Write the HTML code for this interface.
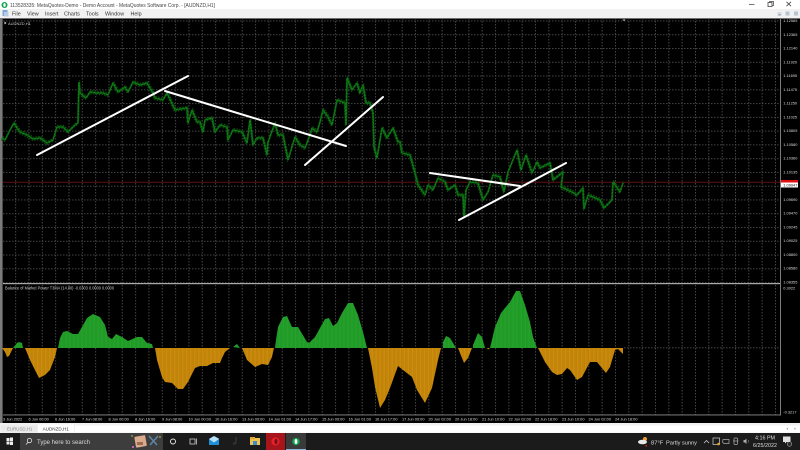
<!DOCTYPE html>
<html><head><meta charset="utf-8"><title>MetaQuotes</title>
<style>
html,body{margin:0;padding:0;background:#000;width:800px;height:450px;overflow:hidden}
svg{display:block;filter:blur(.3px)}
text{font-family:"Liberation Sans",sans-serif}
</style></head><body>
<svg width="800" height="450" viewBox="0 0 800 450" xmlns="http://www.w3.org/2000/svg">
<defs>
<pattern id="gv" x="1.85" y="0" width="13.33" height="3" patternUnits="userSpaceOnUse"><rect width="0.9" height="1.5" fill="#4c4c4c"/></pattern>
<pattern id="gh" x="0" y="6.72" width="3" height="13.77" patternUnits="userSpaceOnUse"><rect width="1.5" height="0.9" fill="#4c4c4c"/></pattern>
<pattern id="gs" x="2" y="0" width="1.33" height="4" patternUnits="userSpaceOnUse"><rect width="1.33" height="4" fill="#26a42c"/><rect width="0.35" height="4" fill="#178a1e"/></pattern>
<pattern id="os" x="2" y="0" width="1.33" height="4" patternUnits="userSpaceOnUse"><rect width="1.33" height="4" fill="#cf8d0c"/><rect width="0.35" height="4" fill="#a87208"/></pattern>
<polyline id="pr" fill="none" stroke-linejoin="bevel" points="2,138 5,140 10,130 14,123 17,128 20,132 27,135 33,139 40,138 47,143 53,140 57,127 63,127 68,132 75,125 78,123 79,82 80,93 86,98 90,92 97,93 103,93 108,95 113,83 118,92 125,87 128,92 133,82 140,85 147,83 153,93 155,98 163,100 167,93 175,110 187,108 188,123 192,110 197,122 200,122 203,132 205,120 212,118 215,132 220,125 227,127 228,140 233,130 242,132 247,143 250,120 253,145 257,138 263,138 267,155 268,142 275,123 278,135 283,135 288,160 295,137 300,145 305,148 310,135 312,128 317,132 320,122 323,110 328,117 332,125 337,100 345,103 346,125 347,78 352,90 357,83 360,93 363,85 366,103 370,103 373,113 374,147 377,158 382,128 387,138 393,128 398,142 400,142 402,153 410,155 415,173 418,185 425,195 428,185 433,190 438,178 445,182 448,190 455,185 458,195 463,195 464,217 466,190 470,182 478,183 483,200 488,192 493,175 500,177 504,192 508,172 517,150 521,170 526,155 532,173 537,162 540,168 550,163 553,180 563,172 561,187 572,192 577,195 583,188 584,209 588,195 600,200 604,208 612,200 613,182 620,192 623,183"/>
</defs>
<rect width="800" height="450" fill="#000"/>
<!-- title -->
<rect width="800" height="9" fill="#fff"/>
<rect y="9" width="800" height="9" fill="#f1f1f1"/>
<circle cx="4.5" cy="5" r="3" fill="#12a150"/><ellipse cx="4.5" cy="5" rx="1.2" ry="1.9" fill="#fff"/>
<text x="10" y="7" font-size="5.4" fill="#444" textLength="205" lengthAdjust="spacingAndGlyphs">113528335: MetaQuotes-Demo - Demo Account - MetaQuotes Software Corp. - [AUDNZD,H1]</text>
<rect x="749" y="4" width="5.5" height="0.8" fill="#555"/>
<rect x="768" y="2.5" width="4" height="4" fill="none" stroke="#444" stroke-width=".8"/><path d="M769.5 2.500V1.500H773.500V5.500H772.200" fill="none" stroke="#444" stroke-width=".7"/>
<path d="M786.500 1.800L791 6.200M791 1.800L786.500 6.200" stroke="#444" stroke-width=".8"/>
<!-- menu -->
<rect x="2.500" y="10" width="5" height="6" fill="#7ea6d8"/><rect x="4" y="12" width="4.500" height="4.500" fill="#b7cbe8"/>
<g font-size="5.4" fill="#333">
<text x="12" y="15.500">File</text><text x="27" y="15.500">View</text><text x="45" y="15.500">Insert</text><text x="64" y="15.500">Charts</text><text x="86" y="15.500">Tools</text><text x="105" y="15.500">Window</text><text x="130.500" y="15.500">Help</text>
</g>
<rect x="777.500" y="12" width="4" height="4" fill="#d4dbe3"/><rect x="785.500" y="11.500" width="4" height="4" fill="#b8c4d0"/><rect x="794" y="11.500" width="4" height="4" fill="#b8c4d0"/>
<rect x="778.500" y="14.500" width="2" height=".7" fill="#667"/>
<!-- frame -->
<rect x="0" y="18" width="800" height="1" fill="#707070"/>
<rect x="0" y="18" width="2.600" height="405" fill="#7a7a7a"/>
<!-- grid -->
<rect x="3" y="19" width="777" height="264" fill="url(#gv)"/>
<rect x="3" y="285" width="777" height="130" fill="url(#gv)"/>
<rect x="3" y="19" width="777" height="264" fill="url(#gh)"/>
<!-- current price line -->
<rect x="3" y="181.800" width="777" height=".8" fill="#7a1212"/>
<!-- price -->
<use href="#pr" x=".6" y="-1.600" stroke="#09500d" stroke-width="1.200" stroke-dasharray="1.600 1.200"/>
<use href="#pr" x="-.6" y="1.600" stroke="#09500d" stroke-width="1.200" stroke-dasharray="1.300 1.500"/>
<use href="#pr" stroke="#0a5f10" stroke-width="1.800"/>
<use href="#pr" stroke="#12861a" stroke-width=".9" stroke-dasharray="2 1.300"/>
<!-- white trend lines -->
<g stroke="#fff" stroke-width="2" stroke-linecap="round">
<line x1="37" y1="155" x2="188" y2="76"/>
<line x1="165" y1="91" x2="346" y2="146"/>
<line x1="305" y1="165" x2="383" y2="97"/>
<line x1="430" y1="173" x2="520" y2="186"/>
<line x1="459" y1="220" x2="566" y2="163"/>
</g>
<!-- separator + axis -->
<rect x="3" y="283" width="777" height="1.200" fill="#a8a8a8"/>
<rect x="3" y="414.500" width="777" height=".9" fill="#8a8a8a"/>
<rect x="780" y="19" width=".9" height="396.500" fill="#8a8a8a"/>
<path d="M622.500 19.500h3l-1.500 1.500z" fill="#ddd"/>
<!-- histogram -->
<g>
<polygon fill="url(#os)" points="2,348 5,352 7,357 9,356 13,348"/>
<polygon fill="url(#gs)" points="13,348 17,343 19,342 22,343 23,348"/>
<polygon fill="url(#os)" points="25,348 30,360 35,370 39,378 45,375 50,370 55,357 57,348"/>
<polygon fill="url(#gs)" points="58,348 60,338 63,332 67,331 73,334 78,334 82,327 87,318 93,314 100,317 105,325 108,337 112,339 116,334 122,337 128,341 137,337 142,337 147,343 152,344 153,348"/>
<polygon fill="url(#os)" points="155,348 157,360 162,377 165,382 172,383 178,389 183,389 188,382 195,368 200,366 207,366 213,363 220,363 222,358 225,352 230,348"/>
<polygon fill="url(#gs)" points="233,347 237,344 240,348"/>
<polygon fill="url(#os)" points="242,348 247,360 255,367 262,364 268,365 272,357 274,348"/>
<polygon fill="url(#gs)" points="275,348 276,340 278,327 283,317 287,316 292,327 298,327 307,342 309,343 315,337 320,328 325,319 329,318 333,326 337,323 342,313 348,303 353,303 358,315 363,332 367,348"/>
<polygon fill="url(#os)" points="368,348 372,368 375,387 380,408 385,400 390,388 398,366 403,370 412,377 417,390 425,403 432,388 438,360 441,348"/>
<polygon fill="url(#gs)" points="443,348 443,342 446,336 450,338 456,348"/>
<polygon fill="url(#os)" points="458,348 464,363 468,358 472,348"/>
<polygon fill="url(#gs)" points="473,348 473,345 478,333 482,337 485,348"/>
<polygon fill="url(#os)" points="487,348 488,349.500 490,348"/>
<polygon fill="url(#gs)" points="490,348 495,327 501,313 505,308 510,302 516,291 520,291 525,305 530,322 533,337 537,348"/>
<polygon fill="url(#os)" points="538,348 545,362 552,372 557,375 562,374 567,368 570,370 577,380 582,377 590,362 597,362 606,373 610,367 615,350 618,349 623,354 623,348"/>
</g>
<line x1="624" y1="347.800" x2="780" y2="347.800" stroke="#555" stroke-width=".8" stroke-dasharray="1.500 1.500"/>
<!-- chart labels -->
<path d="M4.500 21.500l2 1.500-2 1.500z" fill="#ddd"/>
<text x="8" y="25" font-size="4" fill="#c8c8c8">AUDNZD,H1</text>
<text x="5" y="289.500" font-size="4.800" fill="#c8c8c8" textLength="109" lengthAdjust="spacingAndGlyphs">Balance of Market Power T3MA (14.00) -0.0303 0.0000 0.0000</text>
<g font-size="3.900" fill="#d8d8d8">
<text x="783.300" y="22">1.12585</text><text x="783.300" y="35.800">1.12365</text><text x="783.300" y="49.500">1.12140</text><text x="783.300" y="63.300">1.11920</text><text x="783.300" y="77">1.11695</text><text x="783.300" y="90.800">1.11475</text><text x="783.300" y="104.600">1.11250</text><text x="783.300" y="118.300">1.11025</text><text x="783.300" y="132">1.10805</text><text x="783.300" y="145.800">1.10580</text><text x="783.300" y="159.600">1.10360</text><text x="783.300" y="173.300">1.10135</text><text x="783.300" y="200.800">1.09690</text><text x="783.300" y="214.600">1.09470</text><text x="783.300" y="228.300">1.09245</text><text x="783.300" y="242">1.09025</text><text x="783.300" y="255.800">1.08800</text><text x="783.300" y="269.600">1.08580</text><text x="783.300" y="283.300">1.08355</text>
<text x="783.300" y="289.500">0.3022</text><text x="783.300" y="413.500">-0.3217</text>
</g>
<rect x="781" y="180" width="17" height="2.500" fill="#e01010"/>
<rect x="781" y="182.500" width="17" height="5" fill="#fff"/>
<text x="783.300" y="186.700" font-size="3.900" fill="#111">1.09947</text>
<!-- date labels -->
<g font-size="3.900" fill="#d8d8d8">
<text x="3" y="420.500">3 Jun 2022</text><text x="28.500" y="420.500">6 Jun 00:00</text><text x="55" y="420.500">6 Jun 16:00</text><text x="82" y="420.500">7 Jun 08:00</text><text x="108.500" y="420.500">8 Jun 00:00</text><text x="135" y="420.500">8 Jun 16:00</text><text x="162" y="420.500">9 Jun 08:00</text><text x="188.500" y="420.500">10 Jun 00:00</text><text x="215" y="420.500">10 Jun 16:00</text><text x="242" y="420.500">13 Jun 09:00</text><text x="268.500" y="420.500">14 Jun 01:00</text><text x="295" y="420.500">14 Jun 17:00</text><text x="322" y="420.500">15 Jun 09:00</text><text x="348.500" y="420.500">16 Jun 01:00</text><text x="375" y="420.500">16 Jun 17:00</text><text x="402" y="420.500">17 Jun 09:00</text><text x="428.500" y="420.500">20 Jun 02:00</text><text x="455" y="420.500">20 Jun 18:00</text><text x="482" y="420.500">21 Jun 10:00</text><text x="508.500" y="420.500">22 Jun 02:00</text><text x="535" y="420.500">22 Jun 18:00</text><text x="562" y="420.500">23 Jun 10:00</text><text x="588.500" y="420.500">24 Jun 02:00</text><text x="615" y="420.500">24 Jun 18:00</text>
</g>
<!-- tabs -->
<rect y="423" width="800" height="10" fill="#f0f0f0"/>
<rect x="75" y="425.500" width="725" height="7" fill="#fff"/>
<rect x="1" y="425.500" width="36" height="7" fill="#eaeaea"/>
<rect x="38" y="424.500" width="36" height="8" fill="#fff"/>
<text x="7" y="430.400" font-size="4.400" fill="#888">EURUSD,H1</text>
<text x="42.600" y="430.400" font-size="4.600" fill="#333">AUDNZD,H1</text>
<path d="M788 427.500l-1.500 1.200 1.500 1.200z" fill="#999"/><path d="M794.500 427.500l1.500 1.200-1.500 1.200z" fill="#999"/>
<!-- taskbar -->
<rect y="433" width="800" height="17" fill="#1b1b1b"/>
<g fill="#eee"><rect x="6.500" y="438" width="3" height="3"/><rect x="10" y="437.500" width="3" height="3.500"/><rect x="6.500" y="441.500" width="3" height="3"/><rect x="10" y="441.500" width="3" height="3.500"/></g>
<rect x="20" y="433" width="143" height="17" fill="#3d3d3d"/>
<circle cx="29.500" cy="440.500" r="2.200" fill="none" stroke="#ddd" stroke-width=".8"/><line x1="28" y1="442.300" x2="26" y2="444.500" stroke="#ddd" stroke-width=".8"/>
<text x="37" y="444" font-size="6.400" fill="#d8d8d8" textLength="53" lengthAdjust="spacingAndGlyphs">Type here to search</text>
<rect x="135" y="436" width="11" height="11" rx="1" fill="#d8ab8c" transform="rotate(-10 140 441)"/>
<rect x="137" y="442" width="6" height="3" fill="#a06a50"/>
<circle cx="133" cy="447" r="1" fill="#e070e0"/><circle cx="132" cy="436" r=".7" fill="#c8e060"/>
<path d="M149 436l8 9M158 436l-8 9" stroke="#5c88a8" stroke-width="1.500"/><circle cx="160" cy="437" r=".8" fill="#e8c040"/>
<circle cx="173" cy="441.500" r="2.500" fill="none" stroke="#eee" stroke-width=".9"/>
<rect x="190" y="439" width="5" height="5" fill="none" stroke="#ccc" stroke-width=".8"/><path d="M196.500 438.500v6" stroke="#ccc" stroke-width=".8"/>
<path d="M209 439l5-3 5 3v6h-10z" fill="#1e90d8"/><path d="M209 439l5 3.500 5-3.500v-.2l-5-2.800z" fill="#b8e0f8"/>
<path d="M236 437v6" stroke="#3a3a3a" stroke-width="1.200"/><ellipse cx="234.500" cy="443.500" rx="1.700" ry="1.300" fill="#333"/>
<rect x="250" y="438" width="10" height="7" fill="#f0c24c"/><rect x="250" y="437" width="5" height="2" fill="#e0a830"/><rect x="253" y="441" width="4" height="4" fill="#3a8ed0"/>
<rect x="266" y="433" width="19" height="17" fill="#a8141c"/>
<circle cx="275.500" cy="441.500" r="4" fill="#e8202a"/><ellipse cx="276" cy="441.500" rx="1.500" ry="2.800" fill="#701018"/>
<rect x="286" y="433" width="20" height="17" fill="#3a3a3a"/>
<rect x="286" y="449" width="20" height="1" fill="#8ab4d8"/>
<circle cx="296" cy="441.500" r="3.800" fill="#12a150"/><ellipse cx="296" cy="441.500" rx="1.400" ry="2.500" fill="#fff"/>
<!-- tray -->
<circle cx="645" cy="439" r="2" fill="#f0a030"/><ellipse cx="642.500" cy="442" rx="4.500" ry="2.300" fill="#e8e8e8"/><rect x="645.500" y="445" width="1.500" height="1.500" fill="#e02020"/>
<text x="651" y="444.500" font-size="5.800" fill="#ddd">87°F</text>
<text x="666" y="444.500" font-size="5.800" fill="#ddd" textLength="31" lengthAdjust="spacingAndGlyphs">Partly sunny</text>
<path d="M704 443l2.500-2.500 2.500 2.500" fill="none" stroke="#ddd" stroke-width=".7"/>
<rect x="713" y="438" width="6.500" height="6.500" fill="none" stroke="#bbb" stroke-width=".8"/><circle cx="718.500" cy="444" r="1.300" fill="#e8a020"/>
<path d="M723 439.500h6v4h-5l-1.500-1.500z" fill="none" stroke="#aaa" stroke-width=".7"/>
<rect x="734" y="438" width="3.500" height="6.500" rx="1" fill="none" stroke="#aaa" stroke-width=".7"/><path d="M733 441h5.500" stroke="#aaa" stroke-width=".7"/>
<path d="M743.500 440h1.500l1.500-1.500v5.500l-1.500-1.500h-1.500z" fill="#aaa"/><path d="M748 440q1 1.200 0 2.500" fill="none" stroke="#aaa" stroke-width=".5"/>
<text x="765" y="439.500" font-size="5.400" fill="#ddd" text-anchor="middle">4:16 PM</text>
<text x="765" y="447" font-size="5.400" fill="#ddd" text-anchor="middle">6/25/2022</text>
<path d="M783 436.500h7.500v5.500h-4l-1.500 1.500v-1.500h-2z" fill="#e0e0e0"/><circle cx="789.500" cy="444" r="2.300" fill="#2a2a2a" stroke="#ccc" stroke-width=".5"/>
</svg>
</body></html>
